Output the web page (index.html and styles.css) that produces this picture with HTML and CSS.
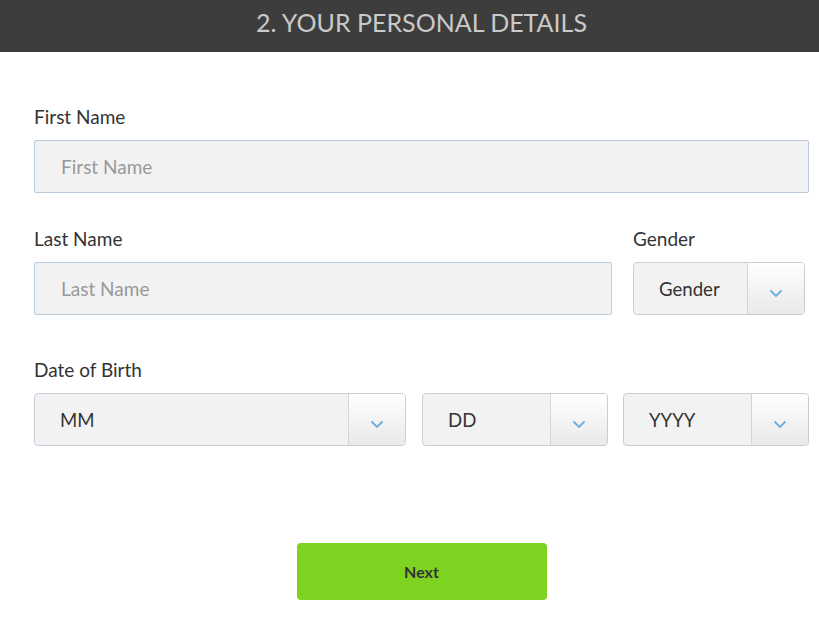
FILE: index.html
```html
<!DOCTYPE html>
<html>
<head>
<meta charset="utf-8">
<link rel="stylesheet" href="styles.css">
</head>
<body>
<div class="header"><h1 class="title">2. YOUR PERSONAL DETAILS</h1></div>
<form class="form">
  <div class="field">
    <label class="label">First Name</label>
    <div class="input">First Name</div>
  </div>
  <div class="row row-name">
    <div class="field grow">
      <label class="label">Last Name</label>
      <div class="input">Last Name</div>
    </div>
    <div class="field gender">
      <label class="label">Gender</label>
      <div class="select">
        <span class="select-text">Gender</span>
        <span class="select-arrow"><svg width="14" height="9" viewBox="0 0 14 9"><path d="M1.5 1.5 L7 7 L12.5 1.5" fill="none" stroke="#6aaee0" stroke-width="1.8"/></svg></span>
      </div>
    </div>
  </div>
  <div class="field dob">
    <label class="label">Date of Birth</label>
    <div class="row row-dob">
      <div class="select mm">
        <span class="select-text">MM</span>
        <span class="select-arrow"><svg width="14" height="9" viewBox="0 0 14 9"><path d="M1.5 1.5 L7 7 L12.5 1.5" fill="none" stroke="#6aaee0" stroke-width="1.8"/></svg></span>
      </div>
      <div class="select dd">
        <span class="select-text">DD</span>
        <span class="select-arrow"><svg width="14" height="9" viewBox="0 0 14 9"><path d="M1.5 1.5 L7 7 L12.5 1.5" fill="none" stroke="#6aaee0" stroke-width="1.8"/></svg></span>
      </div>
      <div class="select yy">
        <span class="select-text">YYYY</span>
        <span class="select-arrow"><svg width="14" height="9" viewBox="0 0 14 9"><path d="M1.5 1.5 L7 7 L12.5 1.5" fill="none" stroke="#6aaee0" stroke-width="1.8"/></svg></span>
      </div>
    </div>
  </div>
  <div class="actions"><button type="button" class="btn">Next</button></div>
</form>
</body>
</html>
```
FILE: styles.css
```css
* { box-sizing: border-box; }
html, body { margin: 0; padding: 0; background: #fff; }
body { font-family: Lato, "Open Sans", sans-serif; color: #333; width: 819px; overflow: hidden; }
.header { background: #3d3d3d; height: 52px; display: flex; align-items: center; justify-content: center; padding-left: 24px; padding-bottom: 8px; }
.title { margin: 0; font-weight: 400; font-size: 25px; color: #c9c9c9; letter-spacing: 0; line-height: 1; }
.form { padding: 0 10px 0 34px; display: flex; flex-direction: column; }
.field { display: flex; flex-direction: column; }
.label { font-size: 19px; color: #333; line-height: 22px; margin-bottom: 12px; }
.form > .field:first-child { margin-top: 54px; }
.input { height: 53px; background: #f2f2f2; border: 1px solid #bccbd9; border-radius: 2px; padding-left: 26px; display: flex; align-items: center; font-size: 19px; color: #999; }
.row { display: flex; }
.row-name { margin-top: 35px; gap: 21px; }
.grow { flex: 1; }
.gender { width: 172px; margin-right: 4px; }
.select { height: 53px; background: #f2f2f2; border: 1px solid #c4cfda; border-radius: 4px; display: flex; overflow: hidden; }
.select-text { flex: 1; display: flex; align-items: center; padding-left: 25px; font-size: 18.6px; color: #333; }
.select-arrow { width: 57px; border-left: 1px solid #d6d6d6; background: linear-gradient(#ffffff, #e9e9e9); display: flex; align-items: center; justify-content: center; padding-top: 9px; }
.dob { margin-top: 44px; }
.row-dob { gap: 16px; }
.mm { width: 372px; }
.dd { width: 186px; }
.yy { width: 186px; margin-left: -1px; }
.actions { display: flex; justify-content: center; margin-top: 97px; }
.btn { width: 250px; height: 57px; background: #7ed321; border: none; border-radius: 4px; font-family: Lato, sans-serif; font-size: 16px; font-weight: 700; color: #333; cursor: pointer; }
```
